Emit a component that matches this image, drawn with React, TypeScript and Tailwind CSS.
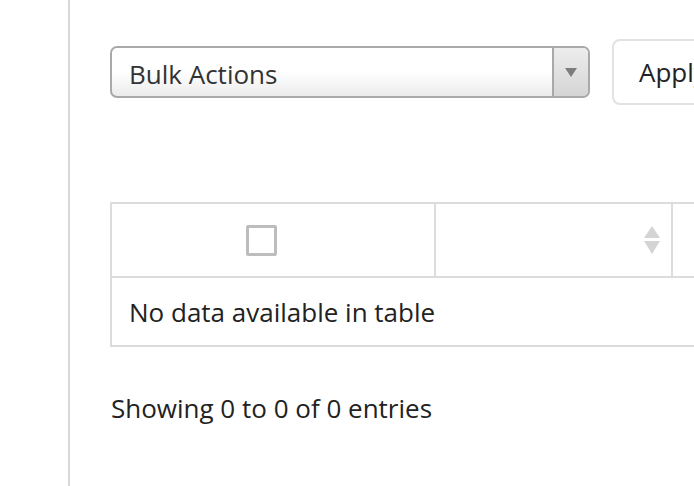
export default function App() {
  return (
    <div className="w-[694px] h-[486px] overflow-hidden bg-white flex font-['Open_Sans',sans-serif] text-[#333]">
      <div className="w-[68px] shrink-0" />
      <div className="flex-1 border-l-2 border-[#d9d9d9] pl-[40px] pt-[39px]">
        <div className="flex items-center gap-[22px] w-[700px]">
          <div className="w-[480px] h-[52px] shrink-0 flex rounded-[7px] border-2 border-[#a9a9a9] bg-gradient-to-b from-white from-50% to-[#ebebeb] overflow-hidden">
            <div className="flex-1 flex items-center pl-[17px] pt-[3px] text-[26px] leading-none">Bulk Actions</div>
            <div className="w-[36px] flex items-center justify-center border-l-2 border-[#a9a9a9] bg-gradient-to-b from-[#ededed] to-[#d5d5d5]">
              <svg width="12" height="9" viewBox="0 0 12 9">
                <path d="M0 0 L12 0 L6 9 Z" fill="#7d7d7d" />
              </svg>
            </div>
          </div>
          <button className="h-[66px] shrink-0 rounded-[8px] border-2 border-[#e2e2e2] bg-white pl-[25px] pr-[23px] text-[26px] text-[#222]">
            Apply
          </button>
        </div>

        <div className="mt-[97px] w-[700px] border-2 border-[#dcdcdc]">
          <div className="flex h-[74px] border-b-2 border-[#dcdcdc]">
            <div className="w-[324px] shrink-0 flex items-center justify-center pr-[24px] border-r-2 border-[#dcdcdc]">
              <div className="w-[31px] h-[31px] border-[3px] border-[#bdbdbd] rounded-[2px]" />
            </div>
            <div className="w-[237px] shrink-0 flex items-center justify-end pr-[10px] border-r-2 border-[#dcdcdc]">
              <svg width="18" height="30" viewBox="0 0 18 30">
                <path d="M9 1 L17 13 L1 13 Z" fill="#d4d4d4" />
                <path d="M1 16 L17 16 L9 29 Z" fill="#d4d4d4" />
              </svg>
            </div>
            <div className="flex-1" />
          </div>
          <div className="h-[67px] flex items-center pl-[17px] pt-[2px] text-[26px] text-[#222]">
            No data available in table
          </div>
        </div>

        <div className="mt-[42px] text-[26px] text-[#222] ml-[1px]">Showing 0 to 0 of 0 entries</div>
      </div>
    </div>
  );
}
